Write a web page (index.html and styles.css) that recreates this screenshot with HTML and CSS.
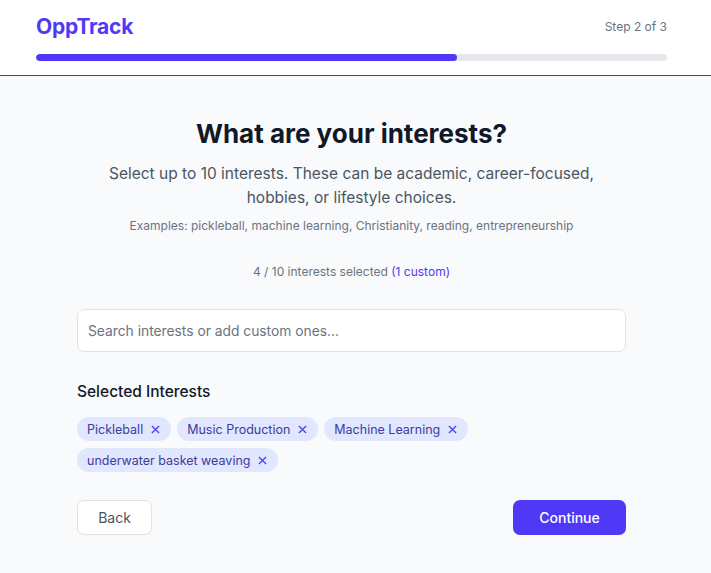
FILE: index.html
```html
<!DOCTYPE html>
<html lang="en">
<head>
<meta charset="utf-8">
<title>OppTrack – Interests</title>
<link rel="stylesheet" href="styles.css">
</head>
<body>
  <header class="header">
    <div class="header-inner">
      <div class="header-top">
        <div class="logo">OppTrack</div>
        <div class="step">Step 2 of 3</div>
      </div>
      <div class="progress"><div class="progress-fill" style="width:66.67%"></div></div>
    </div>
  </header>
  <main class="main">
    <div class="content">
      <h1 class="title">What are your interests?</h1>
      <p class="subtitle">Select up to 10 interests. These can be academic, career-focused, hobbies, or lifestyle choices.</p>
      <p class="examples">Examples: pickleball, machine learning, Christianity, reading, entrepreneurship</p>
      <p class="count">4 / 10 interests selected <span class="custom">(1 custom)</span></p>
      <input class="search" type="text" placeholder="Search interests or add custom ones...">
      <h2 class="selected-title">Selected Interests</h2>
      <div class="chips">
        <span class="chip">Pickleball<svg class="x" viewBox="0 0 10 10"><path d="M1 1L9 9M9 1L1 9"/></svg></span>
        <span class="chip">Music Production<svg class="x" viewBox="0 0 10 10"><path d="M1 1L9 9M9 1L1 9"/></svg></span>
        <span class="chip">Machine Learning<svg class="x" viewBox="0 0 10 10"><path d="M1 1L9 9M9 1L1 9"/></svg></span>
        <span class="chip">underwater basket weaving<svg class="x" viewBox="0 0 10 10"><path d="M1 1L9 9M9 1L1 9"/></svg></span>
      </div>
      <div class="actions">
        <button class="btn btn-back">Back</button>
        <button class="btn btn-continue">Continue</button>
      </div>
    </div>
  </main>
</body>
</html>
```
FILE: styles.css
```css
* { box-sizing: border-box; }
html, body { margin: 0; padding: 0; }
body {
  font-family: Inter, "Noto Sans", sans-serif;
  background: #f9fafb;
  color: #111827;
}
.header {
  background: #fff;
  border-bottom: 1px solid #4b4b4b;
  padding: 13px 44px 14px 36px;
}
.header-top {
  display: flex;
  justify-content: space-between;
  align-items: center;
  height: 26px;
}
.logo {
  font-size: 21px;
  font-weight: 700;
  color: #4f39f6;
  letter-spacing: -0.2px;
}
.step {
  font-size: 12px;
  color: #6b7280;
}
.progress {
  margin-top: 15px;
  height: 7px;
  border-radius: 4px;
  background: #e5e7eb;
  overflow: hidden;
}
.progress-fill {
  height: 100%;
  background: #4f39f6;
  border-radius: 4px;
}
.main {
  padding: 42px 85px 38px 77px;
}
.content {
  width: 549px;
  display: flex;
  flex-direction: column;
}
.title {
  margin: 0;
  text-align: center;
  font-size: 26px;
  line-height: 32px;
  font-weight: 700;
  color: #111827;
}
.subtitle {
  margin: 12px 0 0;
  text-align: center;
  font-size: 15.5px;
  line-height: 24px;
  color: #4b5563;
}
.examples {
  margin: 7px 0 0;
  text-align: center;
  font-size: 12px;
  line-height: 18px;
  color: #6b7280;
}
.count {
  margin: 28px 0 0;
  text-align: center;
  font-size: 12px;
  line-height: 18px;
  color: #6b7280;
}
.custom { color: #4f39f6; }
.search {
  margin-top: 28px;
  height: 43px;
  border: 1px solid #e0e2e6;
  border-radius: 7px;
  background: #fff;
  padding: 0 10px;
  font-family: inherit;
  font-size: 13.8px;
  color: #111827;
  outline: none;
}
.search::placeholder { color: #6b7280; }
.selected-title {
  margin: 29px 0 0;
  font-size: 15.5px;
  line-height: 22px;
  font-weight: 500;
  color: #111827;
}
.chips {
  margin-top: 14px;
  display: flex;
  flex-wrap: wrap;
  gap: 7px 6px;
}
.chip {
  display: inline-flex;
  align-items: center;
  height: 24px;
  padding: 0 11px 0 10px;
  border-radius: 12px;
  background: #e0e7ff;
  color: #3f3aa0;
  font-size: 12.5px;
}
.x {
  margin-left: 8px;
  width: 9px;
  height: 9px;
  stroke: #4f46e5;
  stroke-width: 1.5;
  fill: none;
}
.actions {
  margin-top: 28px;
  display: flex;
  justify-content: space-between;
}
.btn {
  height: 35px;
  border-radius: 7px;
  font-family: inherit;
  font-size: 14px;
  cursor: pointer;
}
.btn-back {
  width: 75px;
  background: #fff;
  border: 1px solid #e0e2e6;
  color: #4b5563;
}
.btn-continue {
  width: 113px;
  background: #4f39f6;
  border: none;
  color: #fff;
  font-weight: 500;
}
```
